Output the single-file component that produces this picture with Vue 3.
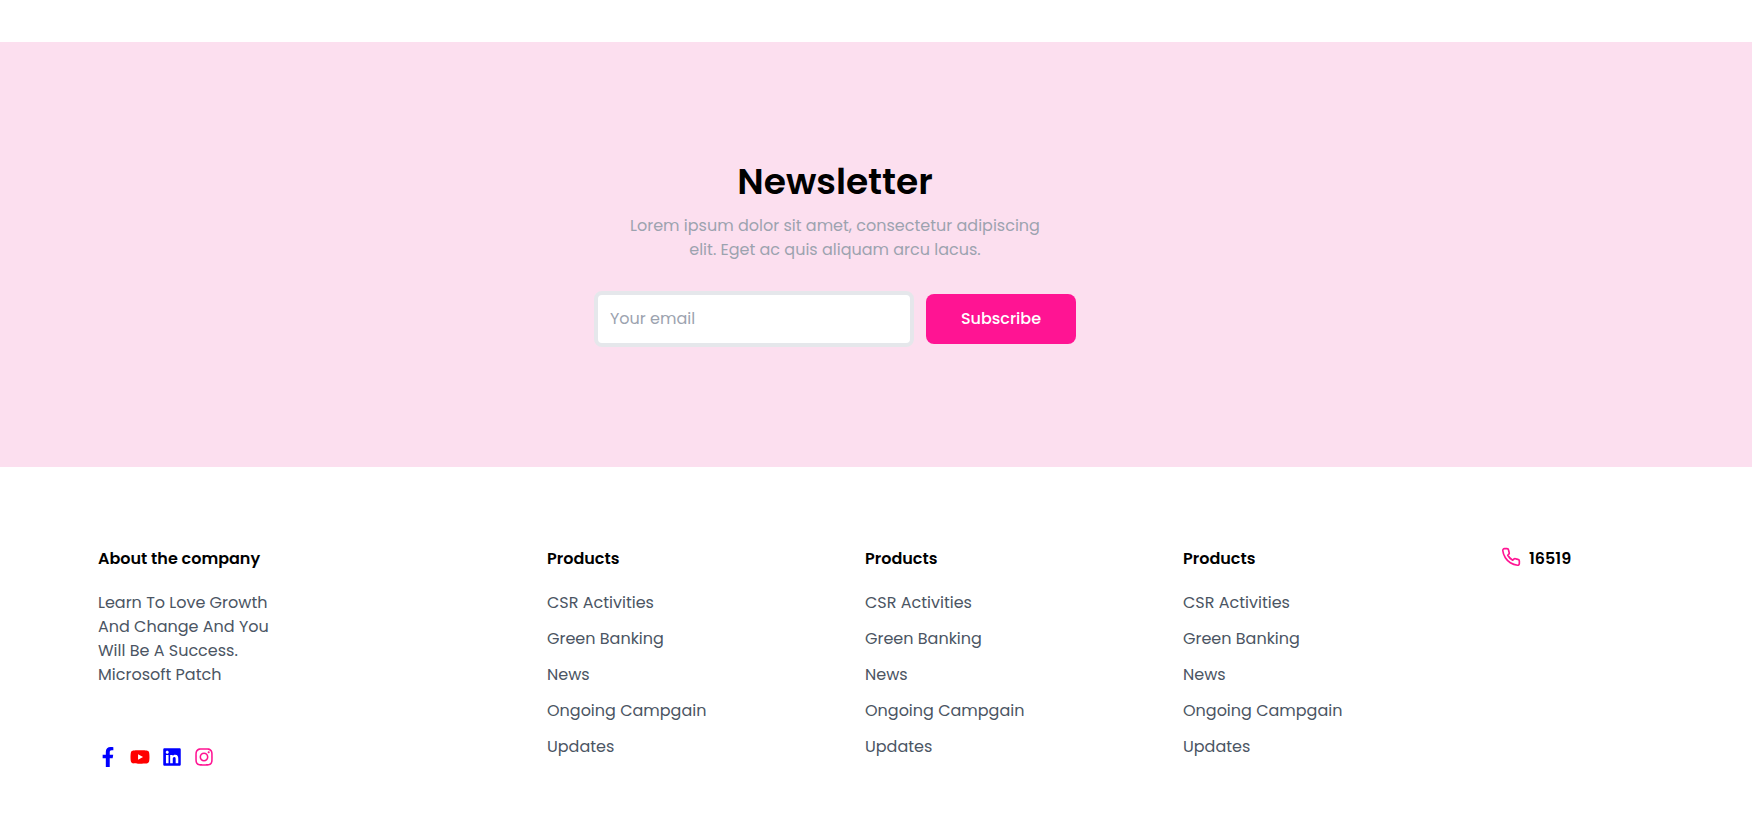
<script setup>
const columns = [1, 2, 3]
const links = ['CSR Activities', 'Green Banking', 'News', 'Ongoing Campgain', 'Updates']
</script>

<template>
  <main class="page">
    <section class="newsletter">
      <div class="newsletter-inner">
        <h2>Newsletter</h2>
        <p class="lead">Lorem ipsum dolor sit amet, consectetur adipiscing<br />elit. Eget ac quis aliquam arcu lacus.</p>
        <form class="form" @submit.prevent>
          <input type="email" placeholder="Your email" aria-label="Your email" />
          <button type="submit">Subscribe</button>
        </form>
      </div>
    </section>

    <footer class="footer">
      <section class="about">
        <h3>About the company</h3>
        <p>Learn To Love Growth And Change And You Will Be A Success. Microsoft Patch</p>
        <nav class="social" aria-label="Social media">
          <a href="#" class="blue" aria-label="Facebook">
            <svg viewBox="0 0 320 512"><path d="M279.14 288l14.22-92.66h-88.91v-60.13c0-25.35 12.42-50.06 52.24-50.06h40.42V6.26S260.43 0 225.36 0c-73.22 0-121.08 44.38-121.08 124.72v70.62H22.89V288h81.39v224h100.17V288z" /></svg>
          </a>
          <a href="#" class="red" aria-label="YouTube">
            <svg viewBox="0 0 576 512"><path d="M549.655 124.083c-6.281-23.65-24.787-42.276-48.284-48.597C458.781 64 288 64 288 64S117.22 64 74.629 75.486c-23.497 6.322-42.003 24.947-48.284 48.597-11.412 42.867-11.412 132.305-11.412 132.305s0 89.438 11.412 132.305c6.281 23.65 24.787 41.5 48.284 47.821C117.22 448 288 448 288 448s170.78 0 213.371-11.486c23.497-6.321 42.003-24.171 48.284-47.821 11.412-42.867 11.412-132.305 11.412-132.305s0-89.438-11.412-132.305zm-317.51 213.508V175.185l142.739 81.205-142.739 81.201z" /></svg>
          </a>
          <a href="#" class="blue" aria-label="LinkedIn">
            <svg viewBox="-32 0 512 512"><path d="M416 32H31.9C14.3 32 0 46.5 0 64.3v383.4C0 465.5 14.3 480 31.9 480H416c17.6 0 32-14.5 32-32.3V64.3c0-17.8-14.4-32.3-32-32.3zM135.4 416H69V202.2h66.5V416zm-33.2-243c-21.3 0-38.5-17.3-38.5-38.5S80.9 96 102.2 96c21.2 0 38.5 17.3 38.5 38.5 0 21.3-17.2 38.5-38.5 38.5zm282.1 243h-66.4V312c0-24.8-.5-56.7-34.5-56.7-34.6 0-39.9 27-39.9 54.9V416h-66.4V202.2h63.7v29.2h.9c8.9-16.8 30.6-34.5 62.9-34.5 67.2 0 79.7 44.3 79.7 101.9V416z" /></svg>
          </a>
          <a href="#" class="pink" aria-label="Instagram">
            <svg viewBox="-32 0 512 512"><path d="M224.1 141c-63.6 0-114.9 51.3-114.9 114.9s51.3 114.9 114.9 114.9S339 319.5 339 255.9 287.7 141 224.1 141zm0 189.6c-41.1 0-74.7-33.5-74.7-74.7s33.5-74.7 74.7-74.7 74.7 33.5 74.7 74.7-33.6 74.7-74.7 74.7zm146.4-194.3c0 14.9-12 26.8-26.8 26.8-14.9 0-26.8-12-26.8-26.8s12-26.8 26.8-26.8 26.8 12 26.8 26.8zm76.1 27.2c-1.7-35.9-9.9-67.7-36.2-93.9-26.2-26.2-58-34.4-93.9-36.2-37-2.1-147.9-2.1-184.9 0-35.8 1.7-67.6 9.9-93.9 36.1s-34.4 58-36.2 93.9c-2.1 37-2.1 147.9 0 184.9 1.7 35.9 9.9 67.7 36.2 93.9s58 34.4 93.9 36.2c37 2.1 147.9 2.1 184.9 0 35.9-1.7 67.7-9.9 93.9-36.2 26.2-26.2 34.4-58 36.2-93.9 2.1-37 2.1-147.8 0-184.8zM398.8 388c-7.8 19.6-22.9 34.7-42.6 42.6-29.5 11.7-99.5 9-132.1 9s-102.7 2.6-132.1-9c-19.6-7.8-34.7-22.9-42.6-42.6-11.7-29.5-9-99.5-9-132.1s-2.6-102.7 9-132.1c7.8-19.6 22.9-34.7 42.6-42.6 29.5-11.7 99.5-9 132.1-9s102.7-2.6 132.1 9c19.6 7.8 34.7 22.9 42.6 42.6 11.7 29.5 9 99.5 9 132.1s2.7 102.7-9 132.1z" /></svg>
          </a>
        </nav>
      </section>

      <nav v-for="column in columns" :key="column" aria-label="Products">
        <h3>Products</h3>
        <ul>
          <li v-for="link in links" :key="link"><a href="#">{{ link }}</a></li>
        </ul>
      </nav>

      <a href="tel:16519" class="phone">
        <svg viewBox="0 0 24 24"><path d="M22 16.92v3a2 2 0 0 1-2.18 2 19.79 19.79 0 0 1-8.63-3.07 19.5 19.5 0 0 1-6-6 19.79 19.79 0 0 1-3.07-8.67A2 2 0 0 1 4.11 2h3a2 2 0 0 1 2 1.72 12.84 12.84 0 0 0 .7 2.81 2 2 0 0 1-.45 2.11L8.09 9.91a16 16 0 0 0 6 6l1.27-1.27a2 2 0 0 1 2.11-.45 12.84 12.84 0 0 0 2.81.7A2 2 0 0 1 22 16.92z" /></svg>
        <span>16519</span>
      </a>
    </footer>
  </main>
</template>

<style>
body {
  background: #fff;
}
</style>

<style scoped>
.page {
  padding-top: 42px;
  font-family: Poppins, Inter, "Open Sans", sans-serif;
  font-size: 16px;
  line-height: 24px;
  color: #000;
}

h2, h3, p, ul {
  margin: 0;
  padding: 0;
}

a {
  color: inherit;
  text-decoration: none;
}

.newsletter {
  display: flex;
  justify-content: center;
  padding: 120px 180px 120px 98px;
  background: #fcdfef;
}

.newsletter-inner {
  display: flex;
  flex-direction: column;
  align-items: center;
}

h2 {
  font-size: 36px;
  line-height: 40px;
  font-weight: 600;
}

.lead {
  margin-top: 12px;
  text-align: center;
  color: #9ca3af;
}

.form {
  display: flex;
  align-items: center;
  gap: 12px;
  margin-top: 29px;
}

.form input {
  box-sizing: border-box;
  width: 320px;
  height: 56px;
  padding: 0 12px 2px;
  border: 4px solid #e5e7eb;
  border-radius: 8px;
  background: #fff;
  font: inherit;
  outline: none;
}

.form input::placeholder {
  color: #9ca3af;
  opacity: 1;
}

.form button {
  width: 150px;
  height: 50px;
  border: 0;
  border-radius: 8px;
  background: #ff1493;
  color: #fff;
  font: inherit;
  font-weight: 500;
}

.footer {
  display: grid;
  grid-template-columns: 449fr 318fr 318fr 318fr 153fr;
  align-items: start;
  padding: 80px 98px 60px;
}

h3 {
  font-size: 16px;
  line-height: 24px;
  font-weight: 600;
}

.about p {
  width: 180px;
  margin-top: 20px;
  color: #4b5563;
}

.social {
  display: flex;
  gap: 12px;
  margin-top: 60px;
}

.social a {
  display: flex;
}

.social svg {
  width: 20px;
  height: 20px;
  fill: currentColor;
}

.blue {
  color: #00f;
}

.red {
  color: #f00;
}

.pink {
  color: #ff1493;
}

ul {
  display: grid;
  gap: 12px;
  margin-top: 20px;
  list-style: none;
  color: #4b5563;
}

.phone {
  display: flex;
  align-items: flex-start;
  gap: 8px;
  font-weight: 600;
}

.phone svg {
  width: 20px;
  height: 20px;
  fill: none;
  stroke: #ff1493;
  stroke-width: 2;
  stroke-linecap: round;
  stroke-linejoin: round;
}
</style>
